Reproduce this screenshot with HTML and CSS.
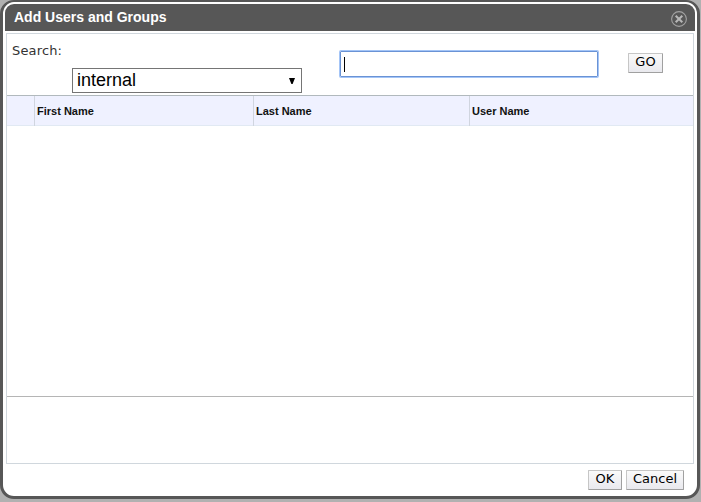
FILE: index.html
```html
<!DOCTYPE html>
<html lang="en">
<head>
<meta charset="utf-8">
<title>Add Users and Groups</title>
<link rel="stylesheet" href="styles.css">
</head>
<body>
<div class="dialog">
  <header class="titlebar">
    <h1 class="title">Add Users and Groups</h1>
    <svg class="close" width="18" height="18" viewBox="0 0 18 18" role="img" aria-label="Close">
      <circle cx="9" cy="9" r="7.4" fill="none" stroke="#a2a2a2" stroke-width="1.1"/>
      <path d="M5.7 5.7L12.3 12.3M12.3 5.7L5.7 12.3" stroke="#b8b8b8" stroke-width="2"/>
    </svg>
  </header>
  <main class="panel">
    <div class="search">
      <span class="label">Search:</span>
      <div class="select"><span>internal</span><svg width="6" height="6" viewBox="0 0 6 6"><path d="M0 0H6L3.6 6H2.4Z" fill="#000"/></svg></div>
      <div class="field"><span class="caret"></span></div>
      <button class="btn go">GO</button>
    </div>
    <div class="thead">
      <div class="th"></div>
      <div class="th">First Name</div>
      <div class="th">Last Name</div>
      <div class="th">User Name</div>
    </div>
    <div class="rows"></div>
    <div class="selected"></div>
  </main>
  <footer class="actions">
    <button class="btn ok">OK</button>
    <button class="btn cancel">Cancel</button>
  </footer>
</div>
</body>
</html>
```
FILE: styles.css
```css
* { box-sizing: border-box; }
body {
  margin: 0;
  width: 701px;
  height: 502px;
  overflow: hidden;
  background: #b1b1b1;
  font-family: "DejaVu Sans", sans-serif;
}
.dialog {
  width: 700px;
  height: 499px;
  border: 3px solid #575757;
  border-top-width: 2px;
  border-radius: 14px;
  background: #fff;
  padding: 2px 2px 0;
}
.titlebar {
  height: 27px;
  display: flex;
  justify-content: space-between;
  background: #575757;
  border-radius: 9px 9px 0 0;
  padding: 0 7px 0 9px;
}
.title {
  margin: 0;
  color: #fff;
  font: bold 14px/26px "Liberation Sans", sans-serif;
}
.close { margin-top: 6px; }
.panel {
  height: 431px;
  margin: 2px 1px 0;
  border: 1px solid #d0d7dd;
  display: flex;
  flex-direction: column;
}
.search {
  height: 61px;
  display: flex;
  align-items: flex-start;
}
.label {
  width: 60px;
  margin: 9px 0 0 5px;
  font-size: 13px;
  line-height: 16px;
  letter-spacing: 0.15px;
  color: #333;
}
.select {
  width: 230px;
  height: 25px;
  margin-top: 34px;
  padding: 0 6px 0 4px;
  border: 1px solid #757575;
  display: flex;
  align-items: center;
  justify-content: space-between;
  font: 18px/22px "Liberation Sans", sans-serif;
}
.select span { padding-bottom: 2px; }
.field {
  width: 258px;
  height: 26px;
  margin: 17px 0 0 38px;
  padding: 5px 3px;
  border: 1px solid #6a93d5;
  border-radius: 1px;
  box-shadow: 0 0 0 1px #a4c5f7;
}
.caret {
  display: block;
  width: 1px;
  height: 15px;
  background: #000;
}
.btn {
  height: 20px;
  margin: 0;
  padding: 0 0 2px;
  border: 1px solid #c6c6c6;
  border-right-color: #a0a0a0;
  border-bottom-color: #a0a0a0;
  border-radius: 1px;
  background: linear-gradient(#fafafa, #e9e9ee);
  font: 13px/16px "DejaVu Sans", sans-serif;
  color: #000;
}
.go { width: 35px; margin: 19px 0 0 30px; }
.ok { width: 34px; }
.cancel { width: 58px; }
.thead {
  height: 31px;
  display: grid;
  grid-template-columns: 28px 219px 216px 1fr;
  border-top: 1px solid #b1b9bd;
  border-bottom: 1px solid #e1e9f3;
  background: #eff1ff;
}
.th {
  border-right: 1px solid #d0d5df;
  padding-left: 2px;
  font: bold 11px/30px "Liberation Sans", sans-serif;
  color: #111;
}
.th:last-child { border-right: 0; }
.rows { flex: 1; }
.selected { height: 67px; border-top: 1px solid #b5b5b5; }
.actions {
  display: flex;
  justify-content: flex-end;
  gap: 4px;
  padding: 6px 11px 0 0;
}
```
